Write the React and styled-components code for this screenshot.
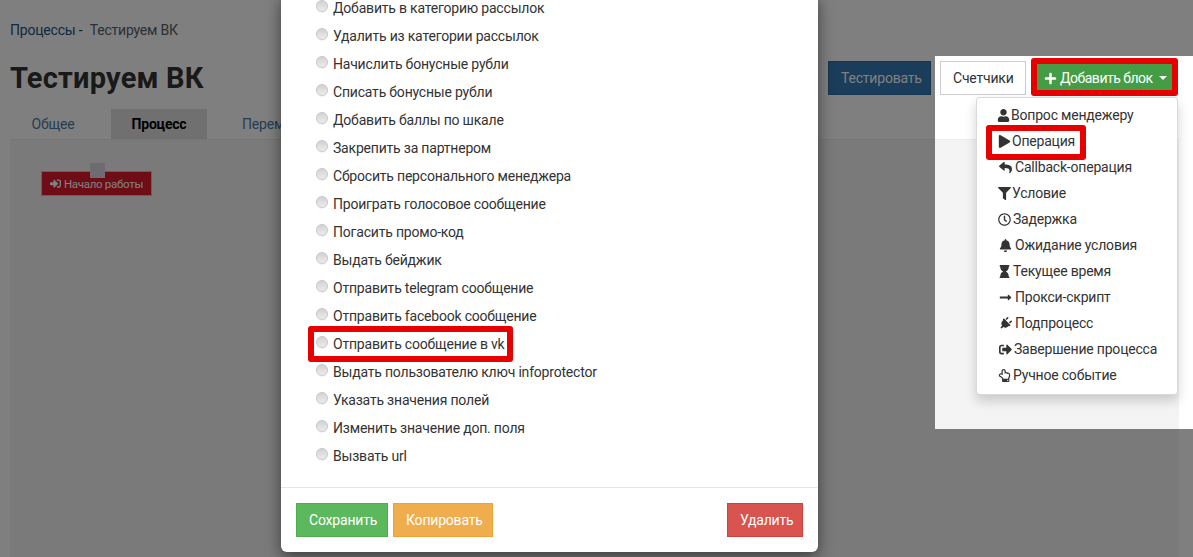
import React from "react";
import styled, { createGlobalStyle } from "styled-components";
import {
  FaUser, FaPlay, FaReply, FaFilter, FaRegClock, FaBell, FaHourglass,
  FaLongArrowAltRight, FaPlug, FaSignOutAlt, FaRegHandPointUp, FaSignInAlt, FaPlus,
} from "react-icons/fa";

const GlobalStyle = createGlobalStyle`
  html, body { margin: 0; padding: 0; height: 100%; overflow: hidden; background: #fff; }
  body { font-family: "Roboto", "Liberation Sans", sans-serif; font-size: 14px; letter-spacing: -0.2px; color: #333; }
  * { box-sizing: border-box; }
`;

const Page = styled.div`
  position: relative;
  height: 100vh;
  overflow: hidden;
  display: flex;
  flex-direction: column;
  padding: 20px 14px 0 10px;
`;

const Header = styled.div`
  display: flex;
  justify-content: space-between;
  height: 89px;
  margin-right: 4px;
`;

const Crumbs = styled.div`
  line-height: 20px;
  color: #333;
  a { color: #23527c; }
  span { color: #555f6a; margin-left: 4px; }
`;

const Title = styled.h1`
  margin: 21px 0 0;
  font-size: 29px;
  line-height: 34px;
  font-weight: 700;
  letter-spacing: 0.2px;
  color: #333;
`;

const Toolbar = styled.div`
  display: flex;
  gap: 9px;
  padding-top: 41px;
  align-items: flex-start;
`;

const Button = styled.button`
  height: 34px;
  padding: 0 12px;
  width: ${(p) => p.$w}px;
  border: 1px solid ${(p) => p.$border};
  border-radius: 0;
  background: ${(p) => p.$bg};
  color: ${(p) => p.$color || "#fff"};
  font: inherit;
  letter-spacing: inherit;
  white-space: nowrap;
`;

const AddWrap = styled.div`
  position: relative;
  margin-left: -1px;
`;

const AddButton = styled(Button)`
  display: flex;
  align-items: center;
  gap: 3px;
  padding: 0 0 0 9px;
  letter-spacing: -0.5px;
  svg { font-size: 13px; flex-shrink: 0; }
`;

const Caret = styled.i`
  width: 0;
  height: 0;
  margin-left: 3px;
  border-top: 4px solid #fff;
  border-left: 4px solid transparent;
  border-right: 4px solid transparent;
`;

const Frame = styled.div`
  position: absolute;
  top: ${(p) => p.$t}px;
  right: ${(p) => p.$r}px;
  bottom: ${(p) => p.$b}px;
  left: ${(p) => p.$l}px;
  border: 6px solid #e60000;
  border-radius: 3px;
  pointer-events: none;
`;

const Menu = styled.ul`
  position: absolute;
  top: 36px;
  right: -3px;
  width: 202px;
  margin: 0;
  padding: 5px 0;
  list-style: none;
  background: #fff;
  border: 1px solid rgba(0, 0, 0, 0.15);
  border-radius: 4px;
  box-shadow: 0 6px 12px rgba(0, 0, 0, 0.175);
`;

const MenuItem = styled.li`
  height: 26px;
  padding-left: 20px;
  display: flex;
  align-items: center;
`;

const MenuLabel = styled.span`
  position: relative;
  display: inline-flex;
  align-items: center;
  height: 26px;
  padding-bottom: 2px;
  gap: 1px;
  white-space: nowrap;
`;

const MenuIcon = styled.span`
  display: inline-flex;
  justify-content: center;
  width: ${(p) => p.$w}px;
  color: #333;
  svg { font-size: 13px; transform: rotate(${(p) => p.$rot || 0}deg); }
`;

const Tabs = styled.div`
  display: flex;
  gap: 15px;
  height: 30px;
`;

const Tab = styled.div`
  padding: 0 20px;
  width: ${(p) => (p.$w ? `${p.$w}px` : "auto")};
  text-align: center;
  line-height: 30px;
  color: ${(p) => (p.$active ? "#000" : "#4a7ba6")};
  font-weight: ${(p) => (p.$active ? 700 : 400)};
  background: ${(p) => (p.$active ? "#e0e0e0" : "transparent")};
`;

const Panel = styled.div`
  flex: 1;
  background: #f4f4f4;
  border-top: 1px solid #ececec;
  padding: 31px 0 0 31px;
`;

const StartNode = styled.div`
  position: relative;
  width: 111px;
  height: 25px;
  display: flex;
  align-items: center;
  justify-content: center;
  gap: 3px;
  background: #de1a2e;
  border: 1px solid #c4c4c4;
  color: #fff;
  font-size: 11.5px;
  letter-spacing: -0.3px;
  svg { font-size: 11px; }
`;

const Handle = styled.div`
  position: absolute;
  top: -9px;
  left: 48px;
  width: 15px;
  height: 15px;
  background: #dcd9e2;
`;

// lit part of the page: the huge shadow dims all around it
const Spotlight = styled.div`
  position: absolute;
  z-index: 20;
  top: 56px;
  left: 935px;
  right: 0;
  height: 373px;
  box-shadow: 0 0 0 2000px rgba(0, 0, 0, 0.5);
  pointer-events: none;
`;

const Lit = styled.div`
  position: relative;
  z-index: 25;
`;

const Modal = styled.div`
  position: absolute;
  z-index: 40;
  left: 281px;
  bottom: 5px;
  width: 537px;
  background: #fff;
  border-radius: 6px;
  box-shadow: 0 5px 15px rgba(0, 0, 0, 0.5);
`;

const Options = styled.div`
  padding: 0 15px 17px 35px;
`;

const Option = styled.label`
  position: relative;
  display: flex;
  align-items: center;
  height: 28px;
  gap: 5px;
  width: max-content;
`;

const Radio = styled.span`
  width: 12px;
  height: 12px;
  margin-top: -4px;
  border-radius: 50%;
  border: 1px solid #c8c8c8;
  background: linear-gradient(#d2d2d2, #ececec);
  box-shadow: 0 1px 1px rgba(0, 0, 0, 0.06);
`;

const Footer = styled.div`
  display: flex;
  gap: 5px;
  padding: 15px;
  border-top: 1px solid #e5e5e5;
`;

const FooterRight = styled.div`
  margin-left: auto;
`;

const options = [
  "Добавить в категорию рассылок",
  "Удалить из категории рассылок",
  "Начислить бонусные рубли",
  "Списать бонусные рубли",
  "Добавить баллы по шкале",
  "Закрепить за партнером",
  "Сбросить персонального менеджера",
  "Проиграть голосовое сообщение",
  "Погасить промо-код",
  "Выдать бейджик",
  "Отправить telegram сообщение",
  "Отправить facebook сообщение",
  "Отправить сообщение в vk",
  "Выдать пользователю ключ infoprotector",
  "Указать значения полей",
  "Изменить значение доп. поля",
  "Вызвать url",
];

const menuItems = [
  { icon: FaUser, w: 13, label: "Вопрос мендежеру" },
  { icon: FaPlay, w: 14, label: "Операция", framed: true },
  { icon: FaReply, w: 17, label: "Callback-операция" },
  { icon: FaFilter, w: 14, label: "Условие" },
  { icon: FaRegClock, w: 15, label: "Задержка" },
  { icon: FaBell, w: 17, label: "Ожидание условия" },
  { icon: FaHourglass, w: 15, label: "Текущее время" },
  { icon: FaLongArrowAltRight, w: 17, label: "Прокси-скрипт" },
  { icon: FaPlug, w: 17, rot: 45, label: "Подпроцесс" },
  { icon: FaSignOutAlt, w: 16, label: "Завершение процесса" },
  { icon: FaRegHandPointUp, w: 15, label: "Ручное событие" },
];

export default function App() {
  return (
    <Page>
      <GlobalStyle />
      <Header>
        <div>
          <Crumbs>
            <a>Процессы</a> - <span>Тестируем ВК</span>
          </Crumbs>
          <Title>Тестируем ВК</Title>
        </div>
        <Toolbar>
          <Button $w={103} $bg="#337ab7" $border="#2e6da4">Тестировать</Button>
          <Lit>
            <Button $w={86} $bg="#fff" $border="#ccc" $color="#333">Счетчики</Button>
          </Lit>
          <Lit>
            <AddWrap>
              <AddButton $w={141} $bg="#449d44" $border="#398439">
                <FaPlus /> Добавить блок <Caret />
              </AddButton>
              <Frame $t={-3} $r={-3} $b={-1} $l={-3} />
              <Menu>
                {menuItems.map(({ icon: Icon, w, rot, label, framed }) => (
                  <MenuItem key={label}>
                    <MenuLabel>
                      <MenuIcon $w={w} $rot={rot}><Icon /></MenuIcon>
                      {label}
                      {framed && <Frame $t={-4} $r={-11} $b={-5} $l={-11} />}
                    </MenuLabel>
                  </MenuItem>
                ))}
              </Menu>
            </AddWrap>
          </Lit>
        </Toolbar>
      </Header>
      <Tabs>
        <Tab $w={86}>Общее</Tab>
        <Tab $w={96} $active>Процесс</Tab>
        <Tab>Переменные</Tab>
      </Tabs>
      <Panel>
        <StartNode>
          <Handle />
          <FaSignInAlt /> Начало работы
        </StartNode>
      </Panel>
      <Spotlight />
      <Modal>
        <Options>
          {options.map((text) => (
            <Option key={text}>
              <Radio />
              {text}
              {text.endsWith("в vk") && <Frame $t={-4} $r={-9} $b={-4} $l={-8} />}
            </Option>
          ))}
        </Options>
        <Footer>
          <Button $w={92} $bg="#5cb85c" $border="#4cae4c">Сохранить</Button>
          <Button $w={100} $bg="#f0ad4e" $border="#eea236">Копировать</Button>
          <FooterRight>
            <Button $w={76} $bg="#d9534f" $border="#d43f3a">Удалить</Button>
          </FooterRight>
        </Footer>
      </Modal>
    </Page>
  );
}
